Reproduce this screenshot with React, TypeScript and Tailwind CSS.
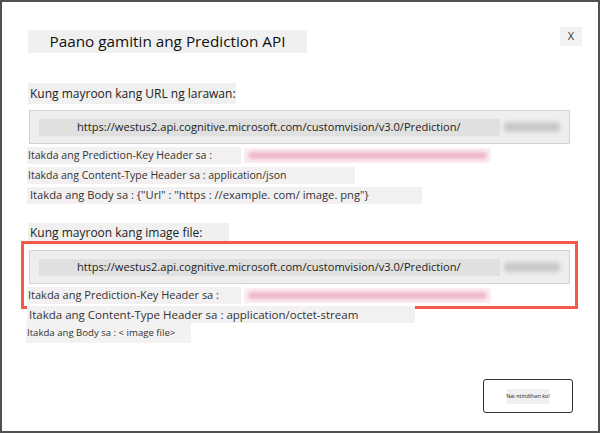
const font = { fontFamily: '"Open Sans", "Noto Sans", sans-serif' };

const UrlBox = () => (
  <div className="w-[541px] h-[34px] border border-[#d3d3d3] bg-[#eeeeee] flex items-center pl-[9px]">
    <div className="w-[461px] h-[17px] bg-[#e0e0e0] flex items-center pl-[38px] text-[11.1px] text-[#222] whitespace-nowrap">
      https://westus2.api.cognitive.microsoft.com/customvision/v3.0/Prediction/
    </div>
    <div className="ml-[4px] w-[56px] h-[10px] bg-[#c9c9c9] blur-[2px] rounded-sm" />
  </div>
);

const KeyRow = ({ size }: { size: string }) => (
  <div className="flex items-center">
    <div className={`w-[214px] h-[17px] bg-[#f2f0f1] flex items-center pl-[1px] text-[#333] whitespace-nowrap ${size}`}>
      Itakda ang Prediction-Key Header sa :
    </div>
    <div className="ml-[3px] w-[247px] h-[15px] bg-[#fcf0f4] flex items-center px-[4px]">
      <div className="w-full h-[7px] bg-[#eeb1c6] blur-[2px] rounded-sm" />
    </div>
  </div>
);

const Row = ({ w, text, cls = "" }: { w: string; text: string; cls?: string }) => (
  <div className={`h-[17px] bg-[#f2f0f1] flex items-center pl-[1px] text-[#333] whitespace-nowrap ${w} ${cls}`}>
    {text}
  </div>
);

export default function App() {
  return (
    <div style={font} className="w-[600px] h-[433px] border-2 border-[#505050] bg-white flex flex-col">
      <div className="flex justify-between items-start pt-[25px] pl-[26px] pr-[16px]">
        <div className="mt-[3px] w-[279px] h-[23px] bg-[#f0f0f0] flex items-center justify-center text-[15.3px] text-[#111] whitespace-nowrap">
          Paano gamitin ang Prediction API
        </div>
        <div className="w-[22px] h-[19px] bg-[#f2f2f2] flex items-center justify-center text-[11px] text-[#333]">
          X
        </div>
      </div>

      <div className="flex flex-col items-start pl-[25px]">
        <div className="mt-[30px] ml-[1px] w-[208px] h-[21px] bg-[#f0f0f0] flex items-center pl-[2px] text-[12px] text-[#222] whitespace-nowrap">
          Kung mayroon kang URL ng larawan:
        </div>
        <div className="mt-[6px] ml-[2px]">
          <UrlBox />
        </div>
        <div className="mt-[3px]">
          <KeyRow size="text-[10.6px]" />
        </div>
        <Row w="w-[328px]" cls="mt-[3px] text-[10.5px]" text="Itakda ang Content-Type Header sa : application/json" />
        <Row
          w="w-[395px]"
          cls="mt-[3px] text-[11.2px] pl-[3px]"
          text={'Itakda ang Body sa : {"Url" : "https : //example. com/ image. png"}'}
        />

        <div className="mt-[19px] ml-[1px] w-[201px] h-[19px] bg-[#f0f0f0] flex items-center pl-[2px] text-[12px] text-[#222] whitespace-nowrap">
          Kung mayroon kang image file:
        </div>

        <div className="-mt-[1px] -ml-[6px] w-[557px] h-[68px] border-[3px] border-[#f25a4c] flex flex-col items-start pt-[6px] pl-[5px]">
          <UrlBox />
          <div className="mt-[3px] -ml-[2px]">
            <KeyRow size="text-[11px]" />
          </div>
        </div>

        <Row
          w="w-[388px]"
          cls="relative z-10 -mt-[3px] text-[11.5px] pl-[2px]"
          text="Itakda ang Content-Type Header sa : application/octet-stream"
        />
        <div className="-ml-[1px] w-[165px] h-[20px] bg-[#f2f2f2] flex items-center pl-[1px] text-[9.6px] text-[#333] whitespace-nowrap">
          Itakda ang Body sa : &lt; image file&gt;
        </div>
      </div>

      <div className="flex justify-end pr-[25px] mt-[36px]">
        <div className="w-[90px] h-[34px] border-[1.5px] border-[#333] rounded-[3px] flex items-center justify-center">
          <div className="w-[42px] h-[15px] bg-[#f0f0f0] flex items-center justify-center text-[5.5px] text-[#222] whitespace-nowrap">
            Nai ntindihan ko!
          </div>
        </div>
      </div>
    </div>
  );
}
